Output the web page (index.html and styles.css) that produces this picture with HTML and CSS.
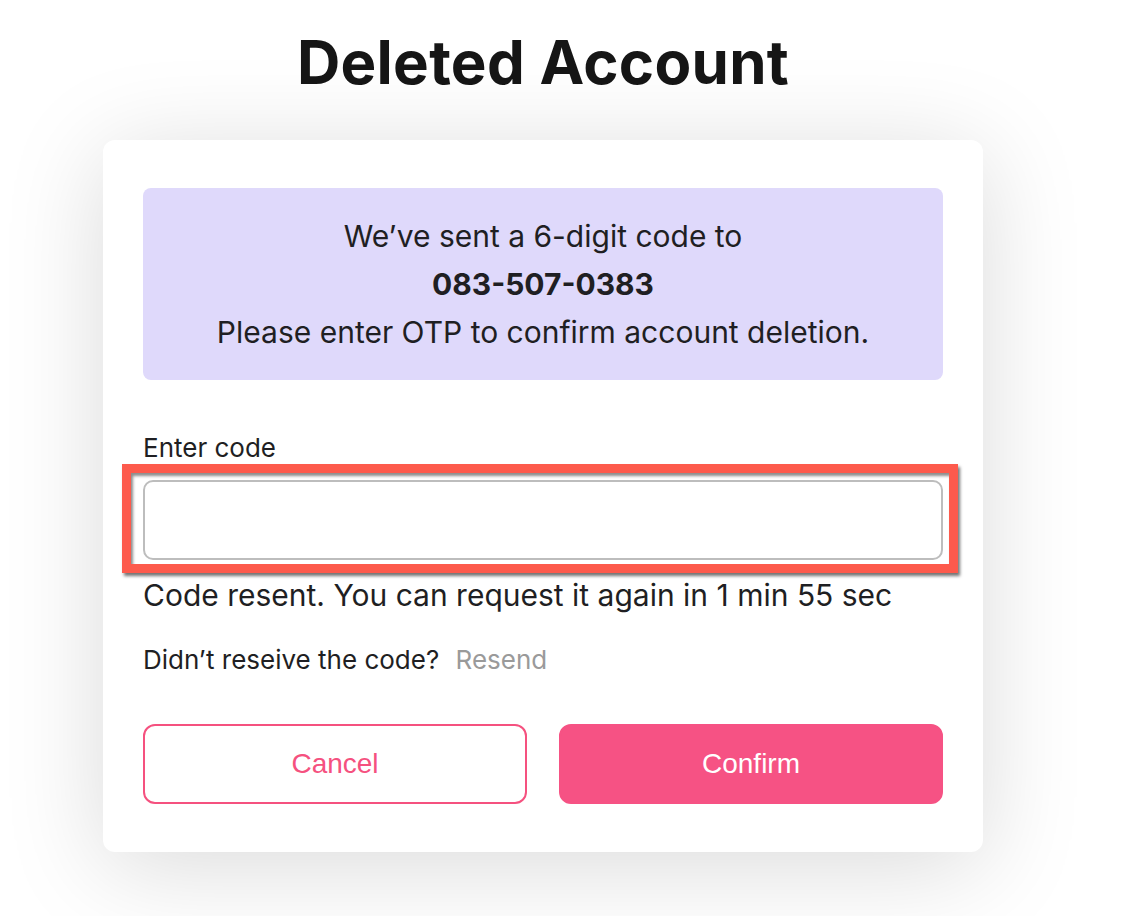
FILE: index.html
```html
<!DOCTYPE html>
<html lang="en">
<head>
    <meta charset="UTF-8">
    <meta name="viewport" content="width=device-width, initial-scale=1.0">
    <title>Deleted Account</title>
    <link rel="stylesheet" href="styles.css">
</head>
<body>
    <div class="page">
        <h1 class="page-title">Deleted Account</h1>

        <div class="otp-card">
            <div class="otp-notice">
                <p>We’ve sent a 6-digit code to</p>
                <p class="otp-phone">083-507-0383</p>
                <p>Please enter OTP to confirm account deletion.</p>
            </div>

            <label class="otp-label" for="codeInput">Enter code</label>
            <div class="otp-field">
                <input type="text" id="codeInput" class="otp-input">
                <span class="otp-highlight"></span>
            </div>

            <p class="otp-status">Code resent. You can request it again in 1 min 55 sec</p>
            <p class="otp-resend">Didn’t reseive the code? <a href="#" class="resend-link">Resend</a></p>

            <div class="otp-actions">
                <button class="btn btn-outline">Cancel</button>
                <button class="btn btn-primary">Confirm</button>
            </div>
        </div>
    </div>
</body>
</html>
```

FILE: styles.css
```css
body {
    margin: 0;
    background: #fff;
    font-family: 'Inter', 'Noto Sans', sans-serif;
    color: #1f1f23;
}

.page {
    display: flex;
    flex-direction: column;
    align-items: center;
    box-sizing: border-box;
    min-height: 100vh;
    padding: 26px 36px 0 0;
    overflow: hidden;
}

.page-title {
    margin: 0;
    font-size: 60px;
    line-height: 72px;
    font-weight: 700;
    color: #161616;
    letter-spacing: 0.3px;
}

.otp-card {
    margin-top: 42px;
    width: 800px;
    padding: 48px 40px;
    background: #fff;
    border-radius: 12px;
    box-shadow: 0 14px 100px rgba(0, 0, 0, 0.15); /* soft wide shadow */
}

.otp-notice {
    background: #dfd9fb;
    border-radius: 8px;
    padding: 24px 20px;
    text-align: center;
}

.otp-notice p {
    margin: 0;
    font-size: 30px;
    line-height: 48px;
}

.otp-notice .otp-phone {
    font-weight: 700;
}

.otp-label {
    display: block;
    margin-top: 52px;
    font-size: 26px;
    line-height: 32px;
}

.otp-field {
    position: relative;
    margin-top: 16px;
}

.otp-input {
    display: block;
    box-sizing: border-box;
    width: 100%;
    height: 80px;
    border: 2px solid #bdbdbd;
    border-radius: 10px;
    font-size: 24px;
    padding: 0 16px;
    outline: none;
}

/* red annotation frame over the input */
.otp-highlight {
    position: absolute;
    top: -16px;
    bottom: -13px;
    left: -21px;
    right: -15px;
    border: 9px solid #fd5a4c;
    box-shadow: 2px 3px 3px rgba(0, 0, 0, 0.55), inset 2px 3px 3px rgba(0, 0, 0, 0.45);
    pointer-events: none;
}

.otp-status {
    margin: 15px 0 0;
    font-size: 30px;
    line-height: 40px;
}

.otp-resend {
    margin: 29px 0 0;
    font-size: 26px;
    line-height: 32px;
}

.resend-link {
    margin-left: 9px;
    color: #9a9a9a;
    text-decoration: none;
}

.otp-actions {
    display: flex;
    gap: 32px;
    margin-top: 48px;
}

.btn {
    flex: 1;
    width: 0;
    height: 80px;
    padding: 0;
    border: 2px solid #f5517f;
    border-radius: 12px;
    font-family: 'Liberation Sans', Arial, sans-serif;
    font-size: 28px;
    cursor: pointer;
}

.btn-outline {
    background: #fff;
    color: #f5517f;
}

.btn-primary {
    background: #f65284;
    border-color: #f65284;
    color: #fff;
}
```
